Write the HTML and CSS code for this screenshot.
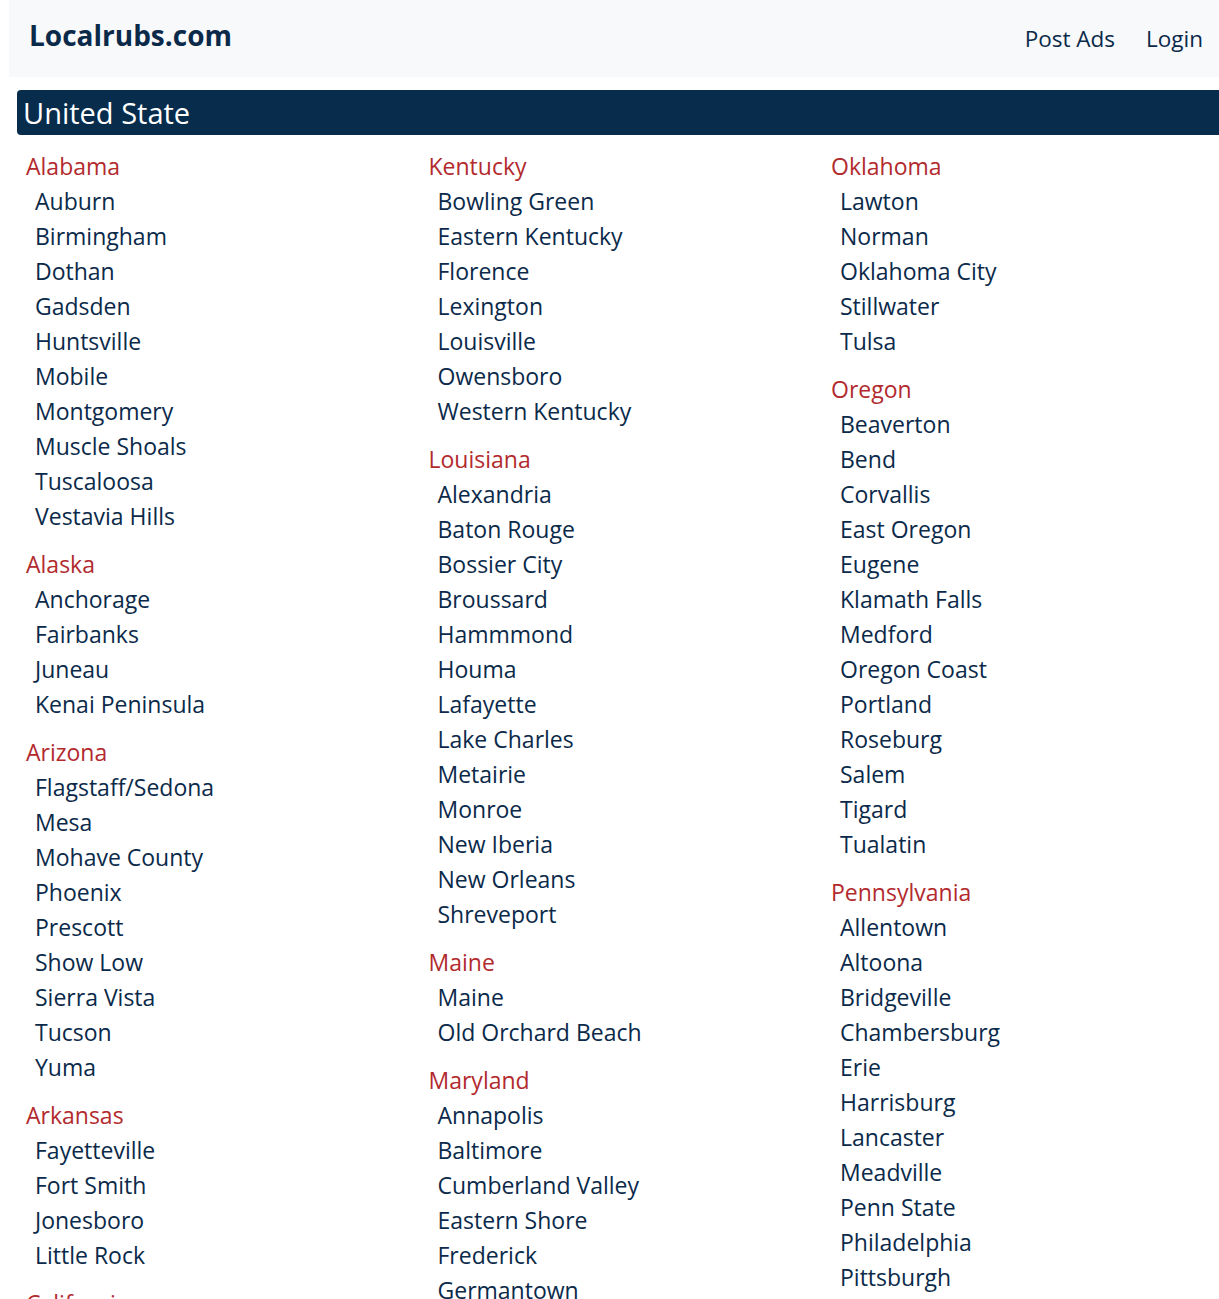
FILE: index.html
```html
<!DOCTYPE html>
<html lang="en">
<head>
<meta charset="utf-8">
<title>Localrubs.com</title>
<link rel="stylesheet" href="styles.css">
</head>
<body>
<header class="topbar">
  <a class="brand" href="#">Localrubs.com</a>
  <nav class="nav">
    <a href="#">Post Ads</a>
    <a href="#">Login</a>
  </nav>
</header>
<main class="main">
  <h1 class="country">United State</h1>
  <div class="cols">
    <div class="col">
      <div class="group"><a class="state" href="#">Alabama</a>
        <a href="#">Auburn</a><a href="#">Birmingham</a><a href="#">Dothan</a><a href="#">Gadsden</a><a href="#">Huntsville</a><a href="#">Mobile</a><a href="#">Montgomery</a><a href="#">Muscle Shoals</a><a href="#">Tuscaloosa</a><a href="#">Vestavia Hills</a></div>
      <div class="group"><a class="state" href="#">Alaska</a>
        <a href="#">Anchorage</a><a href="#">Fairbanks</a><a href="#">Juneau</a><a href="#">Kenai Peninsula</a></div>
      <div class="group"><a class="state" href="#">Arizona</a>
        <a href="#">Flagstaff/Sedona</a><a href="#">Mesa</a><a href="#">Mohave County</a><a href="#">Phoenix</a><a href="#">Prescott</a><a href="#">Show Low</a><a href="#">Sierra Vista</a><a href="#">Tucson</a><a href="#">Yuma</a></div>
      <div class="group"><a class="state" href="#">Arkansas</a>
        <a href="#">Fayetteville</a><a href="#">Fort Smith</a><a href="#">Jonesboro</a><a href="#">Little Rock</a></div>
      <div class="group"><a class="state" href="#">California</a>
        <a href="#">Bakersfield</a><a href="#">Chico</a><a href="#">Fresno</a></div>
    </div>
    <div class="col">
      <div class="group"><a class="state" href="#">Kentucky</a>
        <a href="#">Bowling Green</a><a href="#">Eastern Kentucky</a><a href="#">Florence</a><a href="#">Lexington</a><a href="#">Louisville</a><a href="#">Owensboro</a><a href="#">Western Kentucky</a></div>
      <div class="group"><a class="state" href="#">Louisiana</a>
        <a href="#">Alexandria</a><a href="#">Baton Rouge</a><a href="#">Bossier City</a><a href="#">Broussard</a><a href="#">Hammmond</a><a href="#">Houma</a><a href="#">Lafayette</a><a href="#">Lake Charles</a><a href="#">Metairie</a><a href="#">Monroe</a><a href="#">New Iberia</a><a href="#">New Orleans</a><a href="#">Shreveport</a></div>
      <div class="group"><a class="state" href="#">Maine</a>
        <a href="#">Maine</a><a href="#">Old Orchard Beach</a></div>
      <div class="group"><a class="state" href="#">Maryland</a>
        <a href="#">Annapolis</a><a href="#">Baltimore</a><a href="#">Cumberland Valley</a><a href="#">Eastern Shore</a><a href="#">Frederick</a><a href="#">Germantown</a><a href="#">Hagerstown</a></div>
    </div>
    <div class="col">
      <div class="group"><a class="state" href="#">Oklahoma</a>
        <a href="#">Lawton</a><a href="#">Norman</a><a href="#">Oklahoma City</a><a href="#">Stillwater</a><a href="#">Tulsa</a></div>
      <div class="group"><a class="state" href="#">Oregon</a>
        <a href="#">Beaverton</a><a href="#">Bend</a><a href="#">Corvallis</a><a href="#">East Oregon</a><a href="#">Eugene</a><a href="#">Klamath Falls</a><a href="#">Medford</a><a href="#">Oregon Coast</a><a href="#">Portland</a><a href="#">Roseburg</a><a href="#">Salem</a><a href="#">Tigard</a><a href="#">Tualatin</a></div>
      <div class="group"><a class="state" href="#">Pennsylvania</a>
        <a href="#">Allentown</a><a href="#">Altoona</a><a href="#">Bridgeville</a><a href="#">Chambersburg</a><a href="#">Erie</a><a href="#">Harrisburg</a><a href="#">Lancaster</a><a href="#">Meadville</a><a href="#">Penn State</a><a href="#">Philadelphia</a><a href="#">Pittsburgh</a><a href="#">Reading</a></div>
    </div>
  </div>
</main>
</body>
</html>
```
FILE: styles.css
```css
html, body {
  margin: 0;
  padding: 0;
  background: #ffffff;
  overflow: hidden;
}
body {
  font-family: "Open Sans", "Noto Sans", sans-serif;
  color: #0b2a4a;
}
a {
  text-decoration: none;
  color: inherit;
}
.topbar {
  margin-left: 9px;
  height: 77px;
  background: #f8f9fa;
  display: flex;
  align-items: center;
  justify-content: space-between;
  padding: 0 16px 0 20px;
}
.brand {
  font-size: 28px;
  font-weight: 700;
  color: #0b2a4a;
  margin-top: -8px;
}
.nav {
  display: flex;
  gap: 31px;
  font-size: 22.5px;
}
.main {
  margin: 13px 0 0 17px;
}
.country {
  margin: 0;
  height: 45px;
  line-height: 45px;
  background: #072c4c;
  color: #ffffff;
  font-size: 29px;
  font-weight: 400;
  padding-left: 6px;
  border-radius: 4px 0 0 4px;
}
.cols {
  display: grid;
  grid-template-columns: 402.5px 402.5px 402.5px;
  padding-top: 14px;
}
.col {
  padding-left: 9px;
}
.group {
  display: flex;
  flex-direction: column;
  align-items: flex-start;
  margin-bottom: 13px;
}
.group a {
  font-size: 23px;
  line-height: 35px;
  padding-left: 9px;
  white-space: nowrap;
}
.group a.state {
  color: #b22a2e;
  padding-left: 0;
}
```
